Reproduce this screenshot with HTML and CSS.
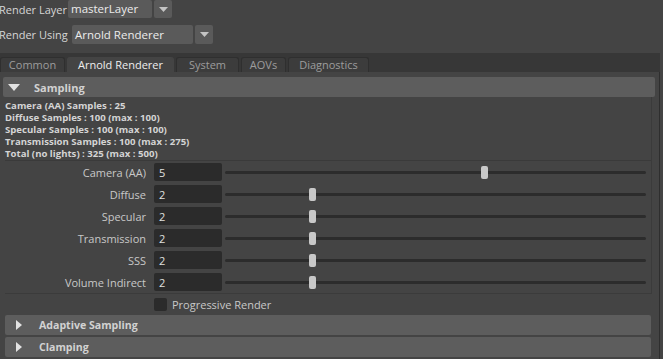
FILE: index.html
```html
<!DOCTYPE html>
<html lang="en">
<head>
    <meta charset="UTF-8">
    <title>Render Settings</title>
    <link rel="stylesheet" href="styles.css">
</head>
<body>
    <div class="top">
        <div class="top-row">
            <span class="top-label">Render Layer</span>
            <div class="combo combo-layer">masterLayer</div>
            <div class="combo-btn"><svg width="9" height="5" viewBox="0 0 9 5"><path d="M0 0H9L4.5 5Z" fill="#c4c4c4"/></svg></div>
        </div>
        <div class="top-row row-using">
            <span class="top-label">Render Using</span>
            <div class="combo combo-renderer">Arnold Renderer</div>
            <div class="combo-btn"><svg width="9" height="5" viewBox="0 0 9 5"><path d="M0 0H9L4.5 5Z" fill="#c4c4c4"/></svg></div>
        </div>
    </div>

    <div class="tabbar">
        <div class="tab tab-common">Common</div>
        <div class="tab tab-arnold active">Arnold Renderer</div>
        <div class="tab tab-system">System</div>
        <div class="tab tab-aovs">AOVs</div>
        <div class="tab tab-diag">Diagnostics</div>
    </div>

    <div class="panel">
        <div class="panel-inner">
            <div class="section-head head-open">
                <svg class="tri" width="12" height="7" viewBox="0 0 12 7"><path d="M0 0H12L6 7Z" fill="#e2e2e2"/></svg>
                <span>Sampling</span>
            </div>
            <div class="section-body">
                <div class="info">
                    <div>Camera (AA) Samples : 25</div>
                    <div>Diffuse Samples : 100 (max : 100)</div>
                    <div>Specular Samples : 100 (max : 100)</div>
                    <div>Transmission Samples : 100 (max : 275)</div>
                    <div>Total (no lights) : 325 (max : 500)</div>
                </div>
                <div class="rows">
                    <div class="field-row">
                        <span class="field-label">Camera (AA)</span>
                        <div class="field">5</div>
                        <div class="slider"><div class="thumb" style="left: 256px"></div></div>
                    </div>
                    <div class="field-row">
                        <span class="field-label">Diffuse</span>
                        <div class="field">2</div>
                        <div class="slider"><div class="thumb" style="left: 84px"></div></div>
                    </div>
                    <div class="field-row">
                        <span class="field-label">Specular</span>
                        <div class="field">2</div>
                        <div class="slider"><div class="thumb" style="left: 84px"></div></div>
                    </div>
                    <div class="field-row">
                        <span class="field-label">Transmission</span>
                        <div class="field">2</div>
                        <div class="slider"><div class="thumb" style="left: 84px"></div></div>
                    </div>
                    <div class="field-row">
                        <span class="field-label">SSS</span>
                        <div class="field">2</div>
                        <div class="slider"><div class="thumb" style="left: 84px"></div></div>
                    </div>
                    <div class="field-row">
                        <span class="field-label">Volume Indirect</span>
                        <div class="field">2</div>
                        <div class="slider"><div class="thumb" style="left: 84px"></div></div>
                    </div>
                </div>
            </div>
            <div class="check-row">
                <span class="checkbox"></span>
                <span>Progressive Render</span>
            </div>
            <div class="section-head head-closed">
                <svg class="tri-right" width="6" height="10" viewBox="0 0 6 10"><path d="M0 0L6 5L0 10Z" fill="#e2e2e2"/></svg>
                <span>Adaptive Sampling</span>
            </div>
            <div class="section-head head-closed">
                <svg class="tri-right" width="6" height="10" viewBox="0 0 6 10"><path d="M0 0L6 5L0 10Z" fill="#e2e2e2"/></svg>
                <span>Clamping</span>
            </div>
        </div>
    </div>
</body>
</html>
```

FILE: styles.css
```css
body {
    margin: 0;
    background-color: #444444;
    font-family: "Open Sans", Arial, sans-serif;
    font-size: 11px;
    color: #cfcfcf;
    overflow: hidden;
    width: 663px;
    height: 359px;
}
.top {
    height: 53px;
}
.top-row {
    display: flex;
    align-items: center;
    height: 18px;
}
.row-using {
    margin-top: 7px;
    height: 19px;
}
.top-label {
    width: 69px;
    margin-left: -1px;
    color: #d6d6d6;
    font-size: 11px;
    white-space: nowrap;
}
.row-using .top-label {
    width: 73px;
}
.combo {
    height: 100%;
    background-color: #5a5a5a;
    border-radius: 2px;
    color: #ececec;
    font-size: 11.5px;
    line-height: 18px;
    padding-left: 3px;
    box-sizing: border-box;
}
.combo-layer {
    width: 84px;
}
.combo-renderer {
    width: 121px;
    line-height: 19px;
}
.combo-btn {
    width: 18px;
    height: 100%;
    margin-left: 2px;
    background-color: #5a5a5a;
    border-radius: 2px;
    display: flex;
    align-items: center;
    justify-content: center;
}
.tabbar {
    width: 660px;
    height: 19px;
    background-color: #373737;
    display: flex;
    align-items: flex-end;
    gap: 2px;
}
.tab {
    height: 15px;
    box-sizing: border-box;
    background-color: #3c3c3c;
    border: 1px solid #2f2f2f;
    border-bottom: none;
    border-radius: 3px 3px 0 0;
    color: #9c9c9c;
    text-align: center;
    line-height: 14px;
    font-size: 11px;
}
.tab.active {
    background-color: #444444;
    color: #eeeeee;
    border-color: #444444;
}
.tab-common { width: 65px; }
.tab-arnold { width: 107px; }
.tab-system { width: 63px; }
.tab-aovs { width: 45px; }
.tab-diag { width: 81px; }
.panel {
    width: 659px;
    height: 287px;
    border-right: 1px solid #2e2e2e;
}
.panel-inner {
    padding-top: 5px;
}
.section-head {
    height: 20px;
    background-color: #5d5d5d;
    border-radius: 2px;
    display: flex;
    align-items: center;
    font-weight: bold;
    color: #d2d2d2;
    font-size: 11px;
}
.head-open {
    margin-left: 3px;
    width: 652px;
}
.head-open .tri {
    margin-left: 5px;
    margin-right: 14px;
}
.head-closed {
    margin-left: 5px;
    width: 646px;
    margin-bottom: 2px;
    font-size: 10.6px;
}
.head-closed .tri-right {
    margin-left: 11px;
    margin-right: 17px;
}
.section-body {
    margin-left: 5px;
    width: 646px;
    border-right: 1px solid #3b3b3b;
    border-bottom: 1px solid #3b3b3b;
    height: 196px;
}
.info {
    font-weight: bold;
    font-size: 9.6px;
    line-height: 12px;
    color: #d4d4d4;
    padding-top: 3px;
    border-bottom: 1px solid #3a3a3a;
}
.field-row {
    display: flex;
    align-items: center;
    height: 22px;
}
.field-label {
    width: 141px;
    text-align: right;
    color: #c8c8c8;
    font-size: 11px;
}
.field {
    width: 68px;
    height: 18px;
    margin-left: 8px;
    background-color: #2b2b2b;
    border-radius: 2px;
    color: #e0e0e0;
    font-size: 11px;
    line-height: 20px;
    padding-left: 5px;
    box-sizing: border-box;
}
.slider {
    position: relative;
    width: 421px;
    height: 3px;
    margin-left: 3px;
    background-color: #2c2c2c;
    border-radius: 2px;
}
.thumb {
    position: absolute;
    top: -5px;
    width: 7px;
    height: 13px;
    background-color: #c8c8c8;
    border-radius: 2px;
}
.check-row {
    display: flex;
    align-items: center;
    height: 21px;
    padding-left: 154px;
    color: #c8c8c8;
}
.checkbox {
    width: 13px;
    height: 13px;
    background-color: #2b2b2b;
    border-radius: 2px;
    margin-right: 5px;
}
```
